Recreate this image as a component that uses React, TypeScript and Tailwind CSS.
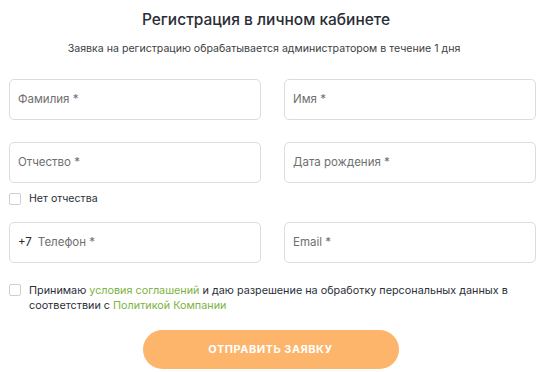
import React from 'react';

function Field({ label, prefix }: { label: string; prefix?: string }) {
  return (
    <div className="flex h-[41px] items-center rounded-[5px] border border-[#dcdcdc] bg-white px-[8px] text-[11.5px]">
      {prefix && <span className="mr-[6px] text-[#2b2b2b]">{prefix}</span>}
      <span className="text-[#6f6f6f]">{label}</span>
    </div>
  );
}

function Box() {
  return <span className="block h-[12px] w-[12px] shrink-0 rounded-[2px] border border-[#cfcfcf] bg-white" />;
}

export default function App() {
  return (
    <div className="h-[372px] w-[541px] overflow-hidden bg-white font-['Inter',sans-serif] text-[#2b2f38]">
      <h1 className="pr-[9px] pt-[10px] text-center text-[15.5px] font-medium leading-[20px] text-[#2a2d35]">
        Регистрация в личном кабинете
      </h1>
      <p className="mt-[12px] pr-[13px] text-center text-[10.6px] leading-[14px] text-[#3d3f45]">
        Заявка на регистрацию обрабатывается администратором в течение 1 дня
      </p>

      <form className="ml-[9px] mr-[5px] mt-[23px]">
        <div className="grid grid-cols-2 gap-x-[23px] gap-y-[22px]">
          <Field label="Фамилия *" />
          <Field label="Имя *" />
          <Field label="Отчество *" />
          <Field label="Дата рождения *" />
        </div>

        <label className="mt-[10px] flex h-[12px] items-center gap-[8px] text-[10.6px] text-[#2b2f38]">
          <Box />
          Нет отчества
        </label>

        <div className="mt-[17px] grid grid-cols-2 gap-x-[23px]">
          <Field label="Телефон *" prefix="+7" />
          <Field label="Email *" />
        </div>

        <div className="mt-[20px] flex items-start gap-[8px] text-[10.8px] leading-[15px] text-[#2b2f38]">
          <span className="mt-[1px]">
            <Box />
          </span>
          <p>
            Принимаю <span className="text-[#7cb342]">условия соглашений</span> и даю разрешение на обработку
            персональных данных в соответствии с <span className="text-[#7cb342]">Политикой Компании</span>
          </p>
        </div>

        <div className="mt-[17px] flex justify-center pr-[4px]">
          <button
            type="button"
            className="h-[39px] w-[256px] rounded-full bg-[#fdb46b] text-[11px] font-bold uppercase tracking-[0.5px] text-white"
          >
            Отправить заявку
          </button>
        </div>
      </form>
    </div>
  );
}
